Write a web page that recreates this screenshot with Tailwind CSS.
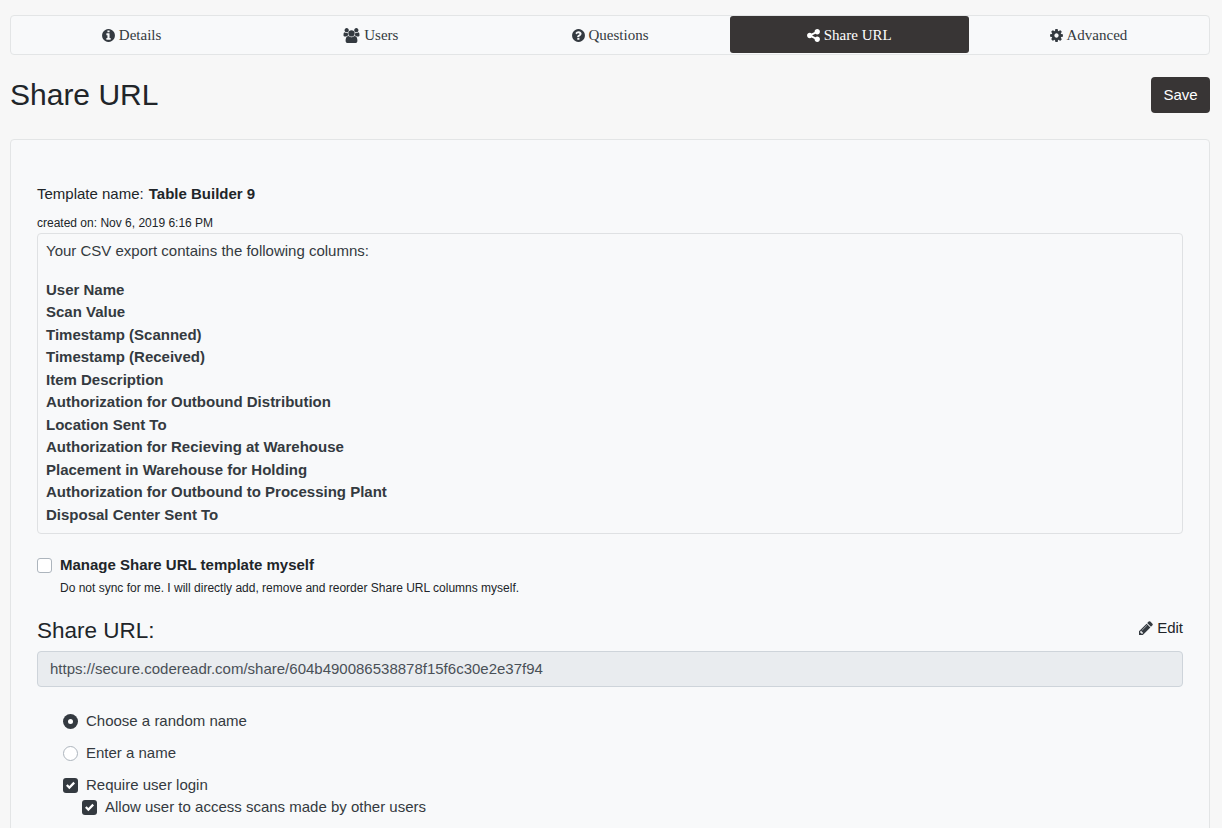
<!DOCTYPE html>
<html lang="en">
<head>
  <meta charset="UTF-8">
  <title>Share URL</title>
  <script src="https://cdn.jsdelivr.net/npm/@tailwindcss/browser@4"></script>
</head>
<body class="bg-[#f7f7f7] text-[#212529] font-['Liberation_Sans',Arial,sans-serif] h-[828px] overflow-hidden">
  <div class="pl-[10px] pr-[12px] pt-[15px]">
    <!-- Tabs -->
    <nav class="flex h-[40px] px-px pb-px bg-[#f8f9fa] border border-[#e3e5e6] rounded-[4px] font-['Liberation_Serif',serif] text-[15px] text-[#343a40]">
      <a class="flex-1 flex items-center justify-center gap-[4px] pt-[2px]">
        <svg class="w-[13px] h-[15px]" viewBox="0 0 1536 1792" fill="#343a40"><path d="M1024 1376v-160q0-14-9-23t-23-9h-96V672q0-14-9-23t-23-9H544q-14 0-23 9t-9 23v160q0 14 9 23t23 9h96v320h-96q-14 0-23 9t-9 23v160q0 14 9 23t23 9h448q14 0 23-9t9-23zM896 480V320q0-14-9-23t-23-9H672q-14 0-23 9t-9 23v160q0 14 9 23t23 9h192q14 0 23-9t9-23zm640 416q0 209-103 385.500T1153.500 1561 768 1664t-385.500-103T103 1281.500 0 896t103-385.500T382.500 231 768 128t385.500 103T1433 510.500 1536 896z"/></svg>
        Details</a>
      <a class="flex-1 flex items-center justify-center gap-[4px] pt-[2px]">
        <svg class="w-[17px] h-[15px]" viewBox="0 0 1920 1792" fill="#343a40"><path d="M593 896q-162 5-265 128H194q-82 0-138-40.500T0 865q0-353 124-353 6 0 43.500 21t97.500 42.500T384 597q67 0 133-23-5 37-5 66 0 139 81 256zm1071 637q0 120-73 189.500t-194 69.500H523q-121 0-194-69.500T256 1533q0-53 3.500-103.500t14-109T300 1212t43-97.500 62-81 85.500-53.500T602 960q10 0 43 21.500t73 48 107 48 135 21.500 135-21.500 107-48 73-48 43-21.500q61 0 111.500 20t85.500 53.500 62 81 43 97.500 26.500 108.500 14 109 3.500 103.500zM640 256q0 106-75 181t-181 75-181-75-75-181 75-181T384 0t181 75 75 181zm704 384q0 159-112.500 271.500T960 1024 688.500 911.500 576 640t112.500-271.500T960 256t271.500 112.500T1344 640zm576 225q0 78-56 118.500t-138 40.500h-134q-103-123-265-128 81-117 81-256 0-29-5-66 66 23 133 23 59 0 119-21.500t97.500-42.500 43.500-21q124 0 124 353zm-128-609q0 106-75 181t-181 75-181-75-75-181 75-181 181-75 181 75 75 181z"/></svg>
        Users</a>
      <a class="flex-1 flex items-center justify-center gap-[4px] pt-[2px]">
        <svg class="w-[13px] h-[15px]" viewBox="0 0 1536 1792" fill="#343a40"><path d="M880 1376v-192q0-14-9-23t-23-9H656q-14 0-23 9t-9 23v192q0 14 9 23t23 9h192q14 0 23-9t9-23zm256-672q0-88-55.500-163T942 425t-170-41q-243 0-371 213-15 24 8 42l132 100q7 6 19 6 16 0 25-12 53-68 86-92 34-24 86-24 48 0 85.500 26t37.500 59q0 38-20 61t-68 45q-63 28-115.500 86.500T604 1019v36q0 14 9 23t23 9h192q14 0 23-9t9-23q0-19 21.500-49.500T939 956q32-18 49-28.500t46-35 44.500-48 28-60.500 12.500-81zm400 192q0 209-103 385.500T1153.500 1561 768 1664t-385.500-103T103 1281.500 0 896t103-385.500T382.500 231 768 128t385.500 103T1433 510.500 1536 896z"/></svg>
        Questions</a>
      <a class="flex-1 flex items-center justify-center gap-[4px] pt-[2px] bg-[#383535] text-white rounded-[3px]">
        <svg class="w-[13px] h-[15px]" viewBox="-96 0 1536 1792" fill="#fff"><path d="M1120 1024q133 0 226.500 93.500T1440 1344t-93.500 226.500T1120 1664t-226.500-93.500T800 1344q0-12 2-34L442 1130q-92 86-218 86-133 0-226.500-93.500T-96 896t93.500-226.500T224 576q126 0 218 86l360-180q-2-22-2-34 0-133 93.500-226.500T1120 128t226.500 93.500T1440 448t-93.500 226.500T1120 768q-126 0-218-86L542 862q2 22 2 34t-2 34l360 180q92-86 218-86z"/></svg>
        Share URL</a>
      <a class="flex-1 flex items-center justify-center gap-[4px] pt-[2px]">
        <svg class="w-[13px] h-[15px]" viewBox="0 0 1536 1792" fill="#343a40"><path d="M1024 896q0-106-75-181t-181-75-181 75-75 181 75 181 181 75 181-75 75-181zm512-109v222q0 12-8 23t-20 13l-185 28q-19 54-39 91 35 50 107 138 10 12 10 25t-9 23q-27 37-99 108t-94 71q-12 0-26-9l-138-108q-44 23-91 38-16 136-29 186-7 28-36 28H657q-14 0-24.500-8.500T621 1634l-28-184q-49-16-90-37l-141 107q-10 9-25 9-14 0-25-11-126-114-165-168-7-10-7-23 0-12 8-23 15-21 51-66.500t54-70.500q-27-50-41-99L29 1042q-13-2-21-12.500T0 1006V784q0-12 8-23t19-13l186-28q14-46 39-92-40-57-107-138-10-12-10-24 0-10 9-23 26-36 98.500-107.500T337 264q13 0 26 10l138 107q44-23 91-38 16-136 29-186 7-28 36-28h222q14 0 24.500 8.500T915 158l28 184q49 16 90 37l142-107q9-9 24-9 13 0 25 10 129 119 165 170 7 8 7 22 0 12-8 23-15 21-51 66.500t-54 70.500q26 50 41 98l183 28q13 2 21 12.500t8 23.500z"/></svg>
        Advanced</a>
    </nav>

    <!-- Title row -->
    <div class="flex items-center justify-between mt-[22px] h-[36px]">
      <h1 class="text-[30px] leading-[36px] font-normal -mt-px">Share URL</h1>
      <button class="h-[36px] w-[59px] bg-[#383535] text-white text-[15px] rounded-[4px]">Save</button>
    </div>

    <!-- Card -->
    <section class="mt-[26px] bg-[#f8f9fa] border border-[#e3e5e6] rounded-[4px] h-[720px] px-[26px] pt-[43px]">
      <div class="flex items-baseline gap-[5px] text-[15px] leading-[22px]">
        <span>Template name:</span><b>Table Builder 9</b>
      </div>
      <p class="text-[12px] leading-[18px] mt-[9px]">created on: Nov 6, 2019 6:16 PM</p>

      <div class="mt-px h-[301px] border border-[#dfe1e3] rounded-[4px] px-[8px] pt-[6px] text-[15px] leading-[22.5px] text-[#343a40]">
        <p class="leading-[22px] mb-[16.5px]">Your CSV export contains the following columns:</p>
        <ul class="font-bold">
          <li>User Name</li>
          <li>Scan Value</li>
          <li>Timestamp (Scanned)</li>
          <li>Timestamp (Received)</li>
          <li>Item Description</li>
          <li>Authorization for Outbound Distribution</li>
          <li>Location Sent To</li>
          <li>Authorization for Recieving at Warehouse</li>
          <li>Placement in Warehouse for Holding</li>
          <li>Authorization for Outbound to Processing Plant</li>
          <li>Disposal Center Sent To</li>
        </ul>
      </div>

      <label class="flex items-center gap-[8px] mt-[21px] h-[21px] text-[15px] font-bold">
        <span class="w-[15px] h-[15px] bg-white border border-[#adb5bd] rounded-[3px]"></span>
        Manage Share URL template myself
      </label>
      <p class="ml-[23px] mt-[3px] text-[12px] leading-[18px]">Do not sync for me. I will directly add, remove and reorder Share URL columns myself.</p>

      <div class="flex items-center justify-between mt-[19px] h-[30px]">
        <h2 class="text-[22.5px] leading-[30px] font-normal">Share URL:</h2>
        <a class="flex items-center gap-[4px] text-[15px] -mt-[6px]">
          <svg class="w-[14px] h-[14px]" viewBox="0 0 1536 1536" fill="#343a40"><path d="M363 1408l91-91-235-235-91 91v107h128v128h107zm523-928q0-22-22-22-10 0-17 7L305 1007q-7 7-7 17 0 22 22 22 10 0 17-7l542-542q7-7 7-17zm-54-192l416 416-832 832H0v-416zm683 96q0 53-37 90l-166 166-416-416 166-165q36-38 90-38 53 0 91 38l235 234q37 39 37 91z"/></svg>
          Edit</a>
      </div>
      <div class="mt-[5px] h-[36px] flex items-center px-[12px] bg-[#e9ecef] border border-[#ced4da] rounded-[4px] text-[15px] text-[#495057]">https://secure.codereadr.com/share/604b490086538878f15f6c30e2e37f94</div>

      <div class="mt-[24px] ml-[26px] text-[15px] text-[#343a40]">
        <label class="flex items-center gap-[8px] h-[21px]">
          <span class="w-[15px] h-[15px] rounded-full bg-[#343a40] flex items-center justify-center"><span class="w-[5px] h-[5px] rounded-full bg-white"></span></span>
          Choose a random name
        </label>
        <label class="flex items-center gap-[8px] h-[21px] mt-[11px]">
          <span class="w-[15px] h-[15px] rounded-full bg-white border border-[#adb5bd]"></span>
          Enter a name
        </label>
        <label class="flex items-center gap-[8px] h-[21px] mt-[11px]">
          <span class="w-[15px] h-[15px] rounded-[3px] bg-[#343a40] flex items-center justify-center">
            <svg class="w-[9px] h-[9px]" viewBox="0 0 8 8" fill="#fff"><path d="M6.564.75l-3.59 3.612-1.538-1.55L0 4.26 2.974 7.25 8 2.193z"/></svg>
          </span>
          Require user login
        </label>
        <label class="flex items-center gap-[8px] h-[21px] ml-[19px] mt-px">
          <span class="w-[15px] h-[15px] rounded-[3px] bg-[#343a40] flex items-center justify-center">
            <svg class="w-[9px] h-[9px]" viewBox="0 0 8 8" fill="#fff"><path d="M6.564.75l-3.59 3.612-1.538-1.55L0 4.26 2.974 7.25 8 2.193z"/></svg>
          </span>
          Allow user to access scans made by other users
        </label>
      </div>
    </section>
  </div>
</body>
</html>
